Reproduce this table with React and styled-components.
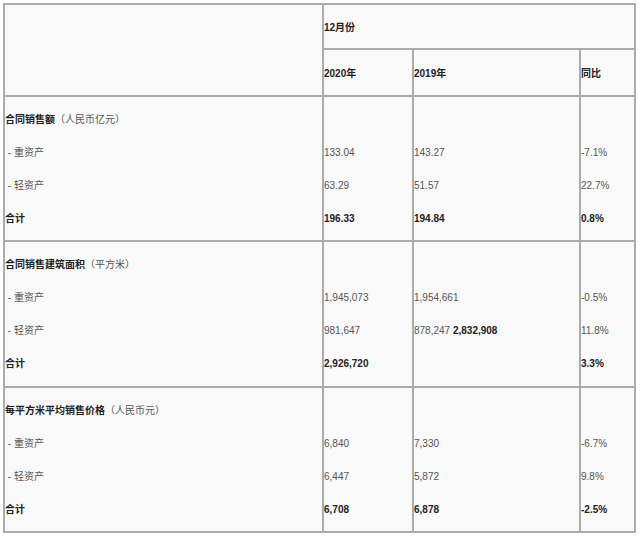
import React from 'react';
import styled, { createGlobalStyle } from 'styled-components';

const GlobalStyle = createGlobalStyle`
  body {
    margin: 0;
    background: #ffffff;
    font-family: "Liberation Sans", "Noto Sans CJK SC", sans-serif;
    font-size: 10px;
    color: #555;
  }
`

const Page = styled.div`
  padding: 3px;
`

const Grid = styled.div`
  display: grid;
  grid-template-columns: 317px 88px 165px 53px;
  grid-template-rows: 43px 45px 143px 144px 143px;
  gap: 2px;
  padding: 2px;
  width: max-content;
  background: #ababab;
`

const Cell = styled.div`
  background: #f9f9f9;
  display: flex;
  flex-direction: column;
  justify-content: center;
  grid-column: ${props => props.span ? `span ${props.span}` : 'auto'};
  grid-row: ${props => props.rows ? `span ${props.rows}` : 'auto'};
  overflow: hidden;
  white-space: nowrap;
`

const HeadText = styled.span`
  font-weight: bold;
  color: #222;
`

const Line = styled.div`
  height: 33px;
  line-height: 33px;
  color: ${props => props.strong ? '#222' : '#555'};
  font-weight: ${props => props.strong ? 'bold' : 'normal'};
`

const Title = styled.b`
  color: #222;
`

const Bold = styled.b`
  color: #222;
`

const sections = [
  {
    title: '合同销售额',
    unit: '（人民币亿元）',
    rows: [
      ['133.04', '143.27', '-7.1%'],
      ['63.29', '51.57', '22.7%'],
      ['196.33', '194.84', '0.8%'],
    ],
  },
  {
    title: '合同销售建筑面积',
    unit: '（平方米）',
    rows: [
      ['1,945,073', '1,954,661', '-0.5%'],
      ['981,647', <>878,247 <Bold>2,832,908</Bold></>, '11.8%'],
      ['2,926,720', '', '3.3%'],
    ],
  },
  {
    title: '每平方米平均销售价格',
    unit: '（人民币元）',
    rows: [
      ['6,840', '7,330', '-6.7%'],
      ['6,447', '5,872', '9.8%'],
      ['6,708', '6,878', '-2.5%'],
    ],
  },
]

const labels = ['\u00a0- 重资产', '\u00a0- 轻资产', '合计']

class App extends React.Component {
  render() {
    return (
      <Page>
        <GlobalStyle />
        <Grid>
          <Cell rows={2} />
          <Cell span={3}><HeadText>12月份</HeadText></Cell>
          <Cell><HeadText>2020年</HeadText></Cell>
          <Cell><HeadText>2019年</HeadText></Cell>
          <Cell><HeadText>同比</HeadText></Cell>
          {sections.map(sec => (
            <React.Fragment key={sec.title}>
              <Cell>
                <Line><Title>{sec.title}</Title>{sec.unit}</Line>
                {labels.map((l, i) => (
                  <Line key={l} strong={i === 2}>{l}</Line>
                ))}
              </Cell>
              {[0, 1, 2].map(col => (
                <Cell key={col}>
                  <Line />
                  {sec.rows.map((r, i) => (
                    <Line key={i} strong={i === 2}>{r[col]}</Line>
                  ))}
                </Cell>
              ))}
            </React.Fragment>
          ))}
        </Grid>
      </Page>
    );
  }
}

export default App;
